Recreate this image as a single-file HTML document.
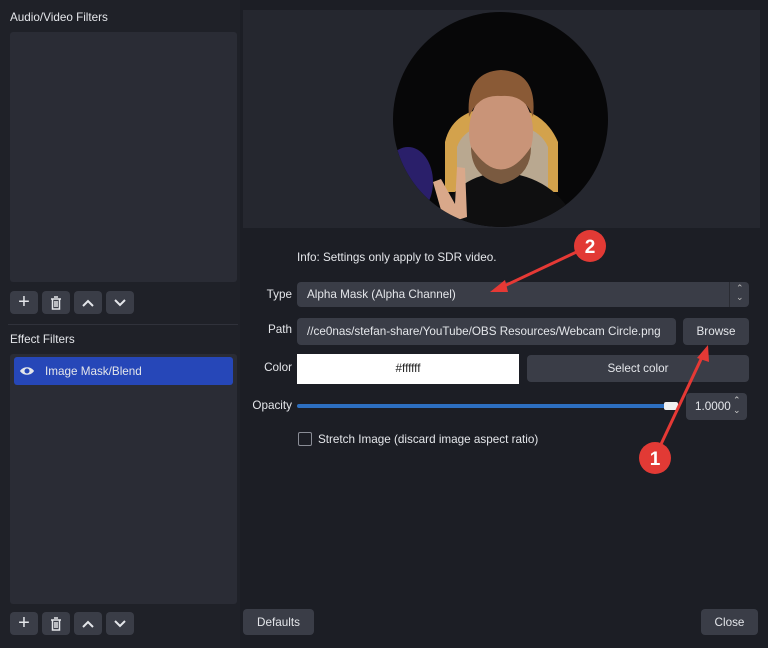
<!DOCTYPE html>
<html><head><style>
*{box-sizing:border-box;margin:0;padding:0}
body{width:768px;height:648px;background:#1c1e25;font-family:"Liberation Sans",sans-serif;font-size:11.7px;color:#e4e6ea;position:relative;overflow:hidden}
.a{position:absolute}
.box{background:#2a2c35;border-radius:3px}
.btn{background:#3a3d47;border-radius:4px;display:flex;align-items:center;justify-content:center;color:#e4e6ea}
.lbl{text-align:right;width:52px}
</style></head><body>
<div class="a" style="left:0;top:0;width:240px;height:648px;background:#1f2128"></div>
<div class="a" style="left:10px;top:11px">Audio/Video Filters</div>
<div class="a box" style="left:10px;top:32px;width:227px;height:250px"></div>
<div class="a btn" style="left:10px;top:291px;width:28px;height:23px;font-size:20px">+</div>
<div class="a btn" style="left:42px;top:291px;width:28px;height:23px"><svg width="12" height="14" viewBox="0 0 12 14"><path d="M1 3h10M4 1h4M2.5 3v10h7V3M5 5v6M7 5v6" stroke="#e4e6ea" stroke-width="1.5" fill="none"/></svg></div>
<div class="a btn" style="left:74px;top:291px;width:28px;height:23px"><svg width="12" height="8"><path d="M1 7l5-5 5 5" stroke="#e4e6ea" stroke-width="2" fill="none"/></svg></div>
<div class="a btn" style="left:106px;top:291px;width:28px;height:23px"><svg width="12" height="8"><path d="M1 1l5 5 5-5" stroke="#e4e6ea" stroke-width="2" fill="none"/></svg></div>
<div class="a" style="left:8px;top:324px;width:230px;height:1px;background:#30323b"></div>
<div class="a" style="left:10px;top:333px">Effect Filters</div>
<div class="a box" style="left:10px;top:354px;width:227px;height:250px"></div>
<div class="a" style="left:14px;top:357px;width:219px;height:28px;background:#2647b8;border-radius:3px"></div>
<svg class="a" style="left:19px;top:365px" width="16" height="12"><path d="M1 6C4 1 12 1 15 6C12 11 4 11 1 6Z" fill="#e4e6ea"/><circle cx="8" cy="6" r="2.5" fill="#2647b8"/></svg>
<div class="a" style="left:45px;top:365px">Image Mask/Blend</div>
<div class="a btn" style="left:10px;top:612px;width:28px;height:23px;font-size:20px">+</div>
<div class="a btn" style="left:42px;top:612px;width:28px;height:23px"><svg width="12" height="14" viewBox="0 0 12 14"><path d="M1 3h10M4 1h4M2.5 3v10h7V3M5 5v6M7 5v6" stroke="#e4e6ea" stroke-width="1.5" fill="none"/></svg></div>
<div class="a btn" style="left:74px;top:612px;width:28px;height:23px"><svg width="12" height="8"><path d="M1 7l5-5 5 5" stroke="#e4e6ea" stroke-width="2" fill="none"/></svg></div>
<div class="a btn" style="left:106px;top:612px;width:28px;height:23px"><svg width="12" height="8"><path d="M1 1l5 5 5-5" stroke="#e4e6ea" stroke-width="2" fill="none"/></svg></div>

<div class="a" style="left:243px;top:10px;width:517px;height:218px;background:#25272f"></div>
<svg class="a" style="left:393px;top:12px" width="215" height="215">
<defs><clipPath id="c"><circle cx="107.5" cy="107.5" r="107.5"/></clipPath></defs>
<g clip-path="url(#c)">
<rect width="215" height="215" fill="#070708"/>
<ellipse cx="15" cy="170" rx="25" ry="35" fill="#2a1f6a"/>
<path d="M52 180V130Q60 95 108 95Q150 95 165 130V180Z" fill="#d3a24c"/>
<path d="M64 180V135Q72 112 108 112Q145 112 155 135V180Z" fill="#b9a890"/>
<path d="M45 215Q55 165 108 160Q165 165 185 215Z" fill="#0f0f10"/>
<ellipse cx="108" cy="120" rx="32" ry="44" fill="#c99478"/>
<path d="M76 105Q72 60 108 58Q145 60 140 105Q132 82 108 84Q85 82 76 105Z" fill="#8a5a36"/>
<path d="M78 135Q108 180 138 135Q138 165 108 172Q78 165 78 135Z" fill="#7a5a40"/>
<path d="M52 212L40 170L48 167L62 192L64 155L72 156L74 205Z" fill="#d9a88a"/>
</g></svg>

<div class="a" style="left:297px;top:251px">Info: Settings only apply to SDR video.</div>
<div class="a lbl" style="left:240px;top:288px">Type</div>
<div class="a" style="left:297px;top:282px;width:452px;height:25px;background:#3a3d47;border-radius:4px;padding:6px 10px">Alpha Mask (Alpha Channel)</div>
<div class="a" style="left:729px;top:282px;width:1px;height:25px;background:#2a2c33"></div>
<div class="a" style="left:736px;top:284px;font-size:9px;line-height:9px;color:#bbb">⌃<br>⌄</div>
<div class="a lbl" style="left:240px;top:323px">Path</div>
<div class="a" style="left:297px;top:318px;width:379px;height:27px;background:#3a3d47;border-radius:4px;padding:7px 10px;white-space:nowrap">//ce0nas/stefan-share/YouTube/OBS Resources/Webcam Circle.png</div>
<div class="a btn" style="left:683px;top:318px;width:66px;height:27px">Browse</div>
<div class="a lbl" style="left:240px;top:361px">Color</div>
<div class="a" style="left:297px;top:354px;width:222px;height:30px;background:#fff;color:#222;text-align:center;line-height:30px">#ffffff</div>
<div class="a btn" style="left:527px;top:355px;width:222px;height:27px">Select color</div>
<div class="a lbl" style="left:240px;top:399px">Opacity</div>
<div class="a" style="left:297px;top:404px;width:382px;height:4px;background:#2d6fc0;border-radius:2px"></div>
<div class="a" style="left:664px;top:402px;width:14px;height:8px;background:#f0f0f0;border-radius:2px"></div>
<div class="a" style="left:686px;top:393px;width:61px;height:27px;background:#3a3d47;border-radius:4px;padding:7px 9px">1.0000</div>
<div class="a" style="left:733px;top:395px;font-size:9px;line-height:10px;color:#ccc">⌃<br>⌄</div>
<div class="a" style="left:298px;top:432px;width:14px;height:14px;border:1px solid #8a8d96;border-radius:2px"></div>
<div class="a" style="left:318px;top:433px">Stretch Image (discard image aspect ratio)</div>

<svg class="a" style="left:0;top:0" width="768" height="648">
<path d="M585 248L500 288" stroke="#e53935" stroke-width="3"/>
<path d="M490 292L505 280L508 292Z" fill="#e53935"/>
<path d="M655 457L703 355" stroke="#e53935" stroke-width="3"/>
<path d="M708 345L697 358L709 362Z" fill="#e53935"/>
<circle cx="590" cy="246" r="16" fill="#e23a35"/>
<text x="590" y="253" fill="#fff" font-size="19" font-weight="bold" text-anchor="middle" font-family="Liberation Sans">2</text>
<circle cx="655" cy="458" r="16" fill="#e23a35"/>
<text x="655" y="465" fill="#fff" font-size="19" font-weight="bold" text-anchor="middle" font-family="Liberation Sans">1</text>
</svg>

<div class="a btn" style="left:243px;top:609px;width:71px;height:26px">Defaults</div>
<div class="a btn" style="left:701px;top:609px;width:57px;height:26px">Close</div>
</body></html>
